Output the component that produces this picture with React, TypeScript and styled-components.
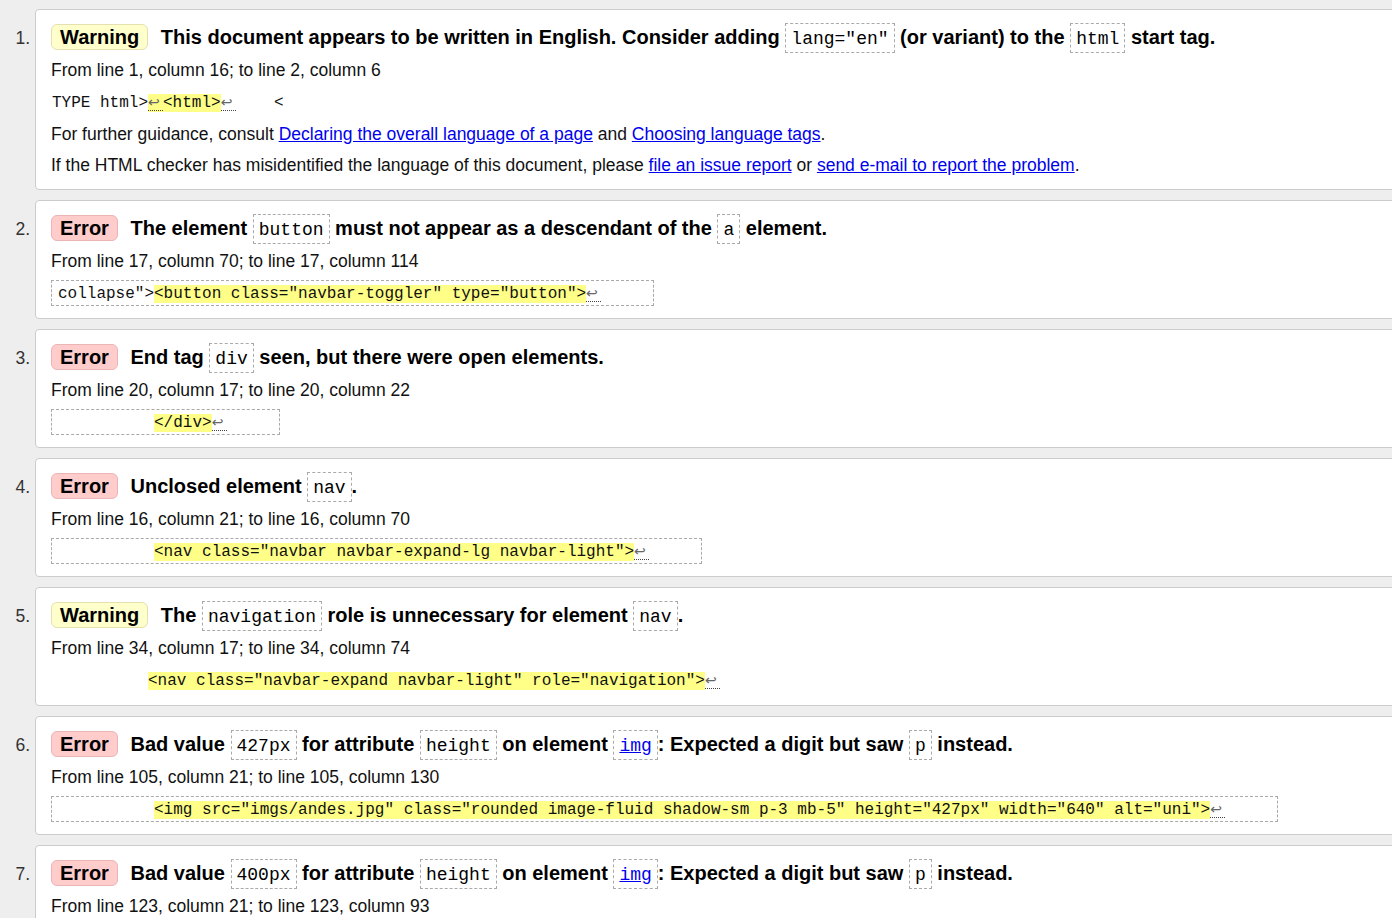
import React from 'react';
import styled, {createGlobalStyle, css} from 'styled-components';

const GlobalStyle = createGlobalStyle`
  html, body {
    margin: 0;
    padding: 0;
    background: #eee;
    overflow: hidden;
  }
  body {
    font-family: "Liberation Sans", Arial, sans-serif;
    color: #111;
  }
`;

const Results = styled.ol`
  list-style: none;
  margin: 0;
  padding: 9px 0 0 0;
  width: 1420px;
`;

const Item = styled.li`
  display: flex;
  align-items: baseline;
  margin-bottom: 10px;
`;

const Num = styled.span`
  flex: 0 0 30px;
  padding-right: 5px;
  text-align: right;
  font-size: 17.5px;
  color: #333;
`;

const Card = styled.div`
  flex: 1;
  background: #fff;
  border: 1px solid #ccc;
  border-radius: 4px;
  padding: 12px 16px 12px 15px;
`;

const Title = styled.p`
  margin: 0;
  font-size: 20px;
  font-weight: bold;
  line-height: 30px;
  height: 30px;
  white-space: nowrap;
  color: #000;
`;

const Badge = styled.strong<{$kind: 'warning' | 'error'}>`
  display: inline-block;
  padding: 0 8px;
  line-height: 24px;
  border: 1px solid;
  border-radius: 6px;
  margin-right: 7px;
  vertical-align: top;
  margin-top: 2px;
  ${p => p.$kind === 'warning'
    ? css`background: #ffc; border-color: #e4e0b0;`
    : css`background: #fcc; border-color: #ebb5b5;`}
`;

const Name = styled.code`
  display: inline-block;
  font-family: "Liberation Mono", "DejaVu Sans Mono", monospace;
  font-size: 18px;
  font-weight: normal;
  line-height: 22px;
  padding: 4px 5px 2px;
  border: 1px dashed #aaa;
  vertical-align: top;
  margin-top: 1px;

  a {
    color: #00e;
    text-decoration: underline;
  }
`;

const Location = styled.p`
  margin: 6px 0 0;
  font-size: 17.5px;
  line-height: 24px;
`;

const Extract = styled.p<{$boxed?: boolean}>`
  margin: 7px 0 0;
  width: fit-content;
  font-family: "Liberation Mono", "DejaVu Sans Mono", monospace;
  font-size: 16px;
  line-height: 22px;
  white-space: pre;
  color: #111;
  ${p => p.$boxed
    ? css`padding: 2px 52px 0 6px; border: 1px dashed #aaa;`
    : css`padding: 2px 0 0; border: 1px solid transparent;`}
`;

const Mark = styled.mark`
  background: #ff8;
  color: inherit;
`;

const Lf = styled.span`
  display: inline-block;
  width: 15px;
  font-family: "DejaVu Sans", sans-serif;
  font-size: 14px;
  line-height: 15px;
  color: #666;
  border-bottom: 1px dotted #444;
`;

const Para = styled.p`
  margin: 7px 0 0;
  font-size: 17.5px;
  line-height: 24px;

  a {
    color: #00e;
    text-decoration: underline;
  }
`;

const NL = () => <Lf>↩</Lf>;

const pad = '          ';

type Message = {
    kind: 'warning' | 'error';
    title: React.ReactNode;
    location: string;
    extract?: React.ReactNode;
    boxed?: boolean;
    notes?: React.ReactNode[];
};

const messages: Message[] = [
    {
        kind: 'warning',
        title: <>This document appears to be written in English. Consider adding <Name>lang="en"</Name> (or variant) to the <Name>html</Name> start tag.</>,
        location: 'From line 1, column 16; to line 2, column 6',
        extract: <>TYPE html&gt;<Mark><NL/>&lt;html&gt;</Mark><NL/>{'    <'}</>,
        notes: [
            <>For further guidance, consult <a href="#">Declaring the overall language of a page</a> and <a href="#">Choosing language tags</a>.</>,
            <>If the HTML checker has misidentified the language of this document, please <a href="#">file an issue report</a> or <a href="#">send e-mail to report the problem</a>.</>,
        ],
    },
    {
        kind: 'error',
        title: <>The element <Name>button</Name> must not appear as a descendant of the <Name>a</Name> element.</>,
        location: 'From line 17, column 70; to line 17, column 114',
        extract: <>collapse"&gt;<Mark>&lt;button class="navbar-toggler" type="button"&gt;</Mark><NL/></>,
        boxed: true,
    },
    {
        kind: 'error',
        title: <>End tag <Name>div</Name> seen, but there were open elements.</>,
        location: 'From line 20, column 17; to line 20, column 22',
        extract: <>{pad}<Mark>&lt;/div&gt;</Mark><NL/></>,
        boxed: true,
    },
    {
        kind: 'error',
        title: <>Unclosed element <Name>nav</Name>.</>,
        location: 'From line 16, column 21; to line 16, column 70',
        extract: <>{pad}<Mark>&lt;nav class="navbar navbar-expand-lg navbar-light"&gt;</Mark><NL/></>,
        boxed: true,
    },
    {
        kind: 'warning',
        title: <>The <Name>navigation</Name> role is unnecessary for element <Name>nav</Name>.</>,
        location: 'From line 34, column 17; to line 34, column 74',
        extract: <>{pad}<Mark>&lt;nav class="navbar-expand navbar-light" role="navigation"&gt;</Mark><NL/></>,
    },
    {
        kind: 'error',
        title: <>Bad value <Name>427px</Name> for attribute <Name>height</Name> on element <Name><a href="#">img</a></Name>: Expected a digit but saw <Name>p</Name> instead.</>,
        location: 'From line 105, column 21; to line 105, column 130',
        extract: <>{pad}<Mark>&lt;img src="imgs/andes.jpg" class="rounded image-fluid shadow-sm p-3 mb-5" height="427px" width="640" alt="uni"&gt;</Mark><NL/></>,
        boxed: true,
    },
    {
        kind: 'error',
        title: <>Bad value <Name>400px</Name> for attribute <Name>height</Name> on element <Name><a href="#">img</a></Name>: Expected a digit but saw <Name>p</Name> instead.</>,
        location: 'From line 123, column 21; to line 123, column 93',
        extract: <>{pad}<Mark>&lt;img src="imgs/uni.jpg" class="rounded image-fluid shadow-sm p-3 mb-5" height="400px" alt="uni"&gt;</Mark><NL/></>,
        boxed: true,
    },
];

const App = () => {
    return (
        <>
            <GlobalStyle/>
            <Results>
                {messages.map((m, i) => (
                    <Item key={i}>
                        <Num>{i + 1}.</Num>
                        <Card>
                            <Title>
                                <Badge $kind={m.kind}>{m.kind === 'warning' ? 'Warning' : 'Error'}</Badge> {m.title}
                            </Title>
                            <Location>{m.location}</Location>
                            {m.extract && <Extract $boxed={m.boxed}>{m.extract}</Extract>}
                            {m.notes && m.notes.map((n, j) => <Para key={j}>{n}</Para>)}
                        </Card>
                    </Item>
                ))}
            </Results>
        </>
    );
};

export default App;
